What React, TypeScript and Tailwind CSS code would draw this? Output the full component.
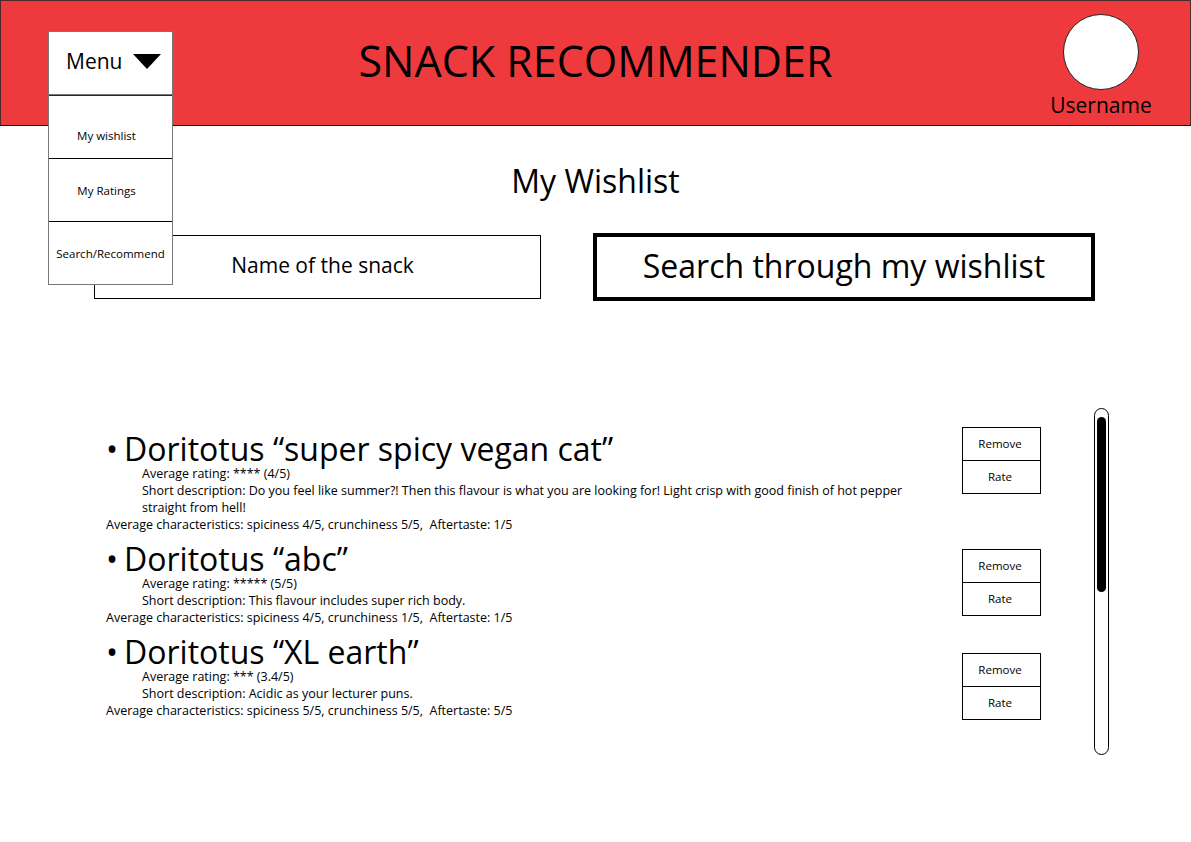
import React from 'react';

type Snack = {
  name: string;
  rating: string;
  desc: string[];
  traits: string;
  btnClass: string;
};

const snacks: Snack[] = [
  {
    name: 'Doritotus “super spicy vegan cat”',
    rating: 'Average rating: **** (4/5)',
    desc: [
      'Short description: Do you feel like summer?! Then this flavour is what you are looking for! Light crisp with good finish of hot pepper',
      'straight from hell!',
    ],
    traits: 'Average characteristics: spiciness 4/5, crunchiness 5/5,  Aftertaste: 1/5',
    btnClass: 'mt-[-6px]',
  },
  {
    name: 'Doritotus “abc”',
    rating: 'Average rating: ***** (5/5)',
    desc: ['Short description: This flavour includes super rich body.'],
    traits: 'Average characteristics: spiciness 4/5, crunchiness 1/5,  Aftertaste: 1/5',
    btnClass: 'mt-[6px]',
  },
  {
    name: 'Doritotus “XL earth”',
    rating: 'Average rating: *** (3.4/5)',
    desc: ['Short description: Acidic as your lecturer puns.'],
    traits: 'Average characteristics: spiciness 5/5, crunchiness 5/5,  Aftertaste: 5/5',
    btnClass: 'mt-[17px]',
  },
];

const menuItems = [
  { label: 'My wishlist', cls: 'pt-[17px] pr-[8px] border-t-[#3a1f1f]' },
  { label: 'My Ratings', cls: 'pt-[2px] pr-[8px] border-t-black' },
  { label: 'Search/Recommend', cls: 'pt-[2px] border-t-black' },
];

function Menu() {
  return (
    <div className="relative w-[125px]">
      <div className="h-[64px] bg-white border border-[#777] flex items-center pl-[17px] gap-[11px] pb-[3px]">
        <span className="text-[21px] leading-none">Menu</span>
        <svg width="28" height="15" viewBox="0 0 28 15">
          <polygon points="0,0 28,0 14,15" fill="#000" />
        </svg>
      </div>
      {/* dropdown sits over the search row */}
      <div className="absolute left-0 top-[64px] w-[125px] z-10 bg-white border-x border-b border-[#777]">
        {menuItems.map((m) => (
          <div
            key={m.label}
            className={`h-[63px] border-t flex items-center justify-center text-[11.5px] whitespace-nowrap ${m.cls}`}
          >
            {m.label}
          </div>
        ))}
      </div>
    </div>
  );
}

function SnackItem({ s }: { s: Snack }) {
  return (
    <div className="flex justify-between items-start">
      <div className="text-[12.5px] leading-[17px] whitespace-pre">
        <div className="text-[32px] leading-[32px] flex">
          <span className="w-[18px]">•</span>
          <span>{s.name}</span>
        </div>
        <div className="pl-[36px]">{s.rating}</div>
        <div className="indent-[36px]">
          {s.desc.map((d, i) => (
            <div key={i}>{d}</div>
          ))}
        </div>
        <div>{s.traits}</div>
      </div>
      <div className={`w-[79px] border border-black text-[11.5px] ${s.btnClass}`}>
        <div className="h-[33px] flex items-center justify-center pr-[3px] border-b border-black">Remove</div>
        <div className="h-[32px] flex items-center justify-center pr-[3px]">Rate</div>
      </div>
    </div>
  );
}

export default function App() {
  return (
    <div className="w-[1191px] h-[842px] bg-white text-black font-['Open_Sans',sans-serif] overflow-hidden">
      {/* Header */}
      <header className="h-[126px] bg-[#ef3a3d] border border-[#4a2a2a] border-b-black grid grid-cols-[1fr_auto_1fr]">
        <div className="pl-[47px] pt-[30px] relative z-10">
          <Menu />
        </div>
        <div className="flex items-center pb-[6px]">
          <h1 className="text-[43px] leading-none">SNACK RECOMMENDER</h1>
        </div>
        <div className="flex justify-end pr-[29px] pt-[13px]">
          <div className="w-[120px] flex flex-col items-center">
            <div className="w-[76px] h-[76px] rounded-full bg-white border border-[#222]" />
            <span className="text-[21px] leading-[28px] mt-[1px]">Username</span>
          </div>
        </div>
      </header>

      <main>
        <h2 className="text-center text-[32px] leading-[40px] mt-[35px]">My Wishlist</h2>

        <div className="flex items-center pl-[94px] gap-[52px] mt-[32px]">
          <div className="w-[447px] h-[64px] border border-black flex items-center justify-center pl-[10px] pb-[2px] text-[21px]">
            Name of the snack
          </div>
          <button className="w-[502px] h-[68px] border-[4px] border-black flex items-center justify-center text-[32px] pb-[2px]">
            Search through my wishlist
          </button>
        </div>

        {/* Wishlist */}
        <div className="flex pl-[106px] mt-[107px]">
          <div className="w-[935px] flex flex-col gap-[10px] pt-[25px]">
            {snacks.map((s) => (
              <SnackItem key={s.name} s={s} />
            ))}
          </div>
          <div className="ml-[53px] w-[15px] h-[347px] rounded-full border-[1.5px] border-black pt-[8px] px-[2px]">
            <div className="h-[175px] rounded-full bg-black" />
          </div>
        </div>
      </main>
    </div>
  );
}
